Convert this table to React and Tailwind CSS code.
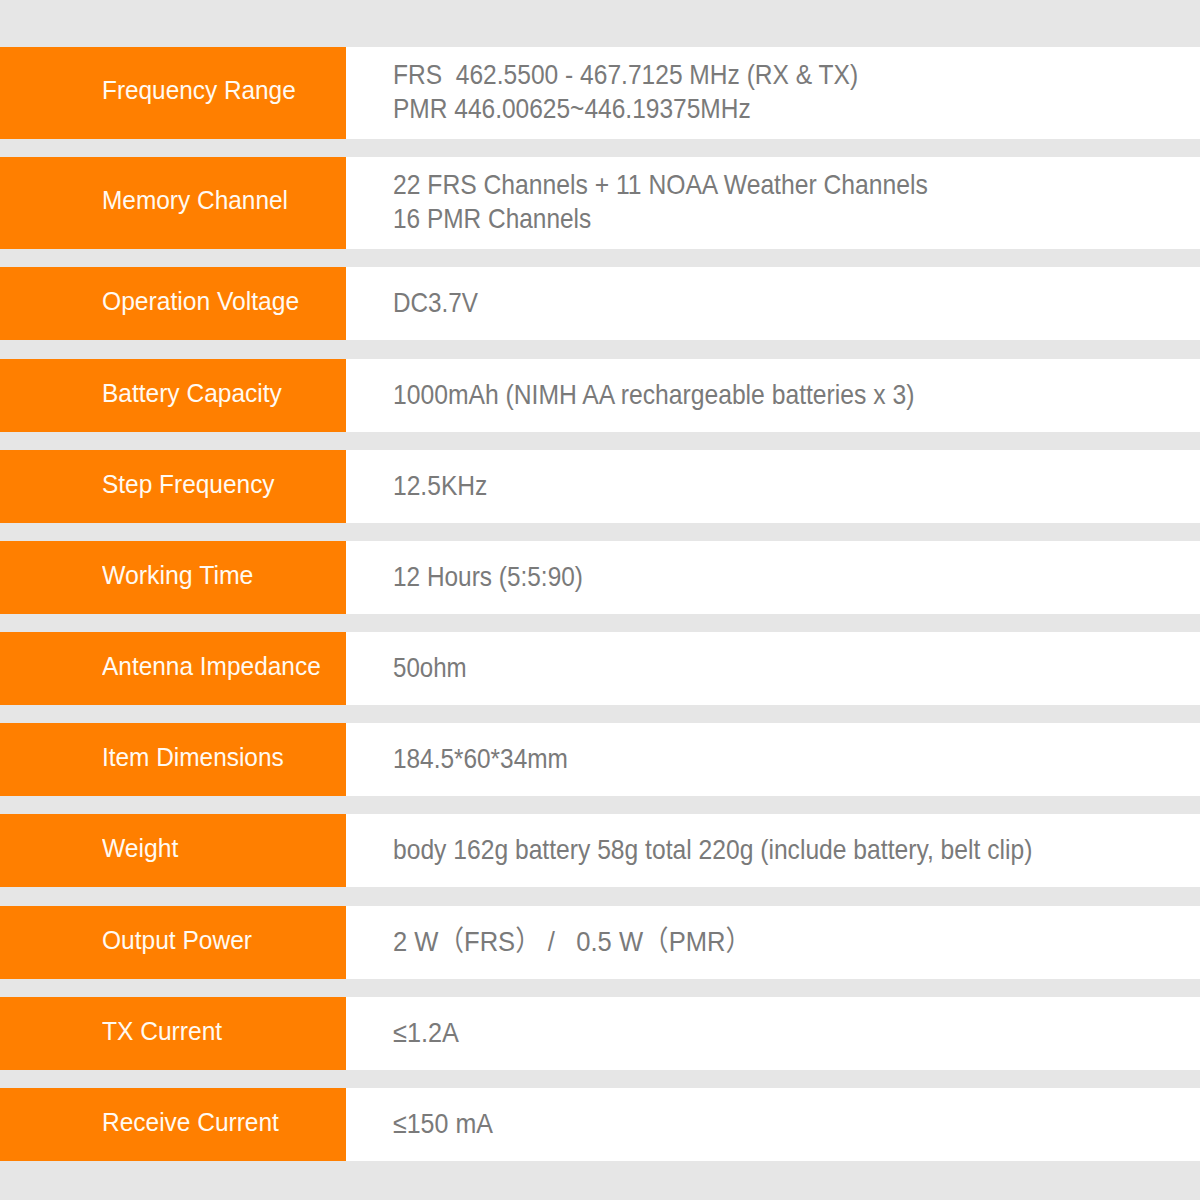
import React, { useLayoutEffect, useRef, useState } from "react";

function Fit({ w, children, className }) {
  const ref = useRef(null);
  const [s, setS] = useState(1);
  useLayoutEffect(() => {
    if (ref.current) {
      const n = ref.current.offsetWidth;
      if (n > 0) setS(w / n);
    }
  }, [w]);
  return (
    <span className={"block h-[1em] leading-none " + (className || "")}>
      <span
        ref={ref}
        className="inline-block whitespace-nowrap origin-left leading-none"
        style={{ transform: `scaleX(${s})` }}
      >
        {children}
      </span>
    </span>
  );
}

const rows = [
  { label: "Frequency Range", lw: 194, h: "h-[92px]", mt: "mt-0", vals: [["FRS\u00a0\u00a0462.5500 - 467.7125 MHz (RX & TX)", 465], ["PMR 446.00625~446.19375MHz", 358]] },
  { label: "Memory Channel", lw: 186, h: "h-[92px]", mt: "mt-[18px]", vals: [["22 FRS Channels + 11 NOAA Weather Channels", 535], ["16 PMR Channels", 198]] },
  { label: "Operation Voltage", lw: 197, h: "h-[73px]", mt: "mt-[18px]", vals: [["DC3.7V", 85]] },
  { label: "Battery Capacity", lw: 180, h: "h-[73px]", mt: "mt-[19px]", vals: [["1000mAh (NIMH AA rechargeable batteries x 3)", 521]] },
  { label: "Step Frequency", lw: 173, h: "h-[73px]", mt: "mt-[18px]", vals: [["12.5KHz", 94]] },
  { label: "Working Time", lw: 151, h: "h-[73px]", mt: "mt-[18px]", vals: [["12 Hours (5:5:90)", 190]] },
  { label: "Antenna Impedance", lw: 219, h: "h-[73px]", mt: "mt-[18px]", vals: [["50ohm", 74]] },
  { label: "Item Dimensions", lw: 182, h: "h-[73px]", mt: "mt-[18px]", vals: [["184.5*60*34mm", 175]] },
  { label: "Weight", lw: 76, h: "h-[73px]", mt: "mt-[18px]", vals: [["body 162g battery 58g total 220g (include battery, belt clip)", 639]] },
  { label: "Output Power", lw: 150, h: "h-[73px]", mt: "mt-[19px]", vals: [["2 W\uff08FRS\uff09\u00a0/\u00a0\u00a0\u00a00.5 W\uff08PMR\uff09", 358]] },
  { label: "TX Current", lw: 120, h: "h-[73px]", mt: "mt-[18px]", vals: [["\u22641.2A", 66]] },
  { label: "Receive Current", lw: 177, h: "h-[73px]", mt: "mt-[18px]", vals: [["\u2264150 mA", 100]] },
];

export default function App() {
  return (
    <div
      className="w-[1200px] h-[1200px] bg-[#e6e6e6] pt-[47px] flex flex-col overflow-hidden"
      style={{ fontFamily: '"Liberation Sans", Arial, "Noto Sans CJK SC", sans-serif' }}
    >
      {rows.map((r, i) => (
        <div key={i} className={"flex shrink-0 " + r.h + " " + r.mt}>
          <div className="w-[346px] shrink-0 bg-[#ff7f00] flex flex-col justify-center pl-[102px] pb-[6px] text-[#fffaf2] text-[26px]">
            <Fit w={r.lw}>{r.label}</Fit>
          </div>
          <div className="flex-1 bg-white flex flex-col justify-center pl-[47px] pb-[2px] text-[#7a7a7a] text-[28px] gap-[6px]">
            {r.vals.map((v, j) => (
              <Fit key={j} w={v[1]}>{v[0]}</Fit>
            ))}
          </div>
        </div>
      ))}
    </div>
  );
}
